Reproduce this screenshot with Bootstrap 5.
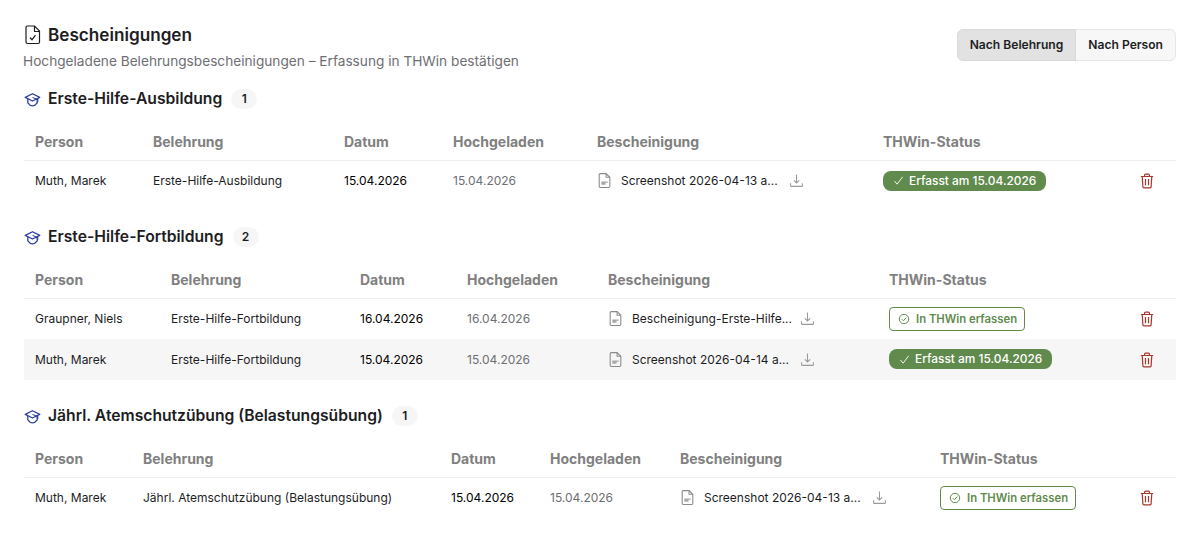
<!DOCTYPE html>
<html lang="de">
<head>
<meta charset="utf-8">
<title>Bescheinigungen</title>
<link href="https://cdn.jsdelivr.net/npm/bootstrap@5.3.0/dist/css/bootstrap.min.css" rel="stylesheet">
<style>
body{font-family:Inter,"Liberation Sans",sans-serif;color:#1d1d1f;background:#fff;font-size:12px;}
.page-wrap{padding:22px 23px 0 24px;}
.page-title{font-size:17.15px;font-weight:600;line-height:26px;margin:0;gap:6px;}
.page-sub{font-size:13.66px;line-height:20px;color:#6e6e73;margin:3px 0 0 -1px;}
.view-toggle{margin-top:7px;height:32px;}
.view-toggle .btn{font-size:12.1px;font-weight:600;color:#1d1d1f;background:#f7f7f7;border:1px solid #e6e6e6;padding:0 12px;line-height:30px;--bs-btn-border-radius:6px;}
.view-toggle .btn.active{background:#e2e2e2;border-color:#d9d9d9;color:#1d1d1f;}
.sec-head{height:24px;gap:7px;}
.sec-title{font-size:15.68px;font-weight:600;line-height:24px;margin:0;}
.sec-count{font-size:12px;font-weight:600;background:#f6f6f6;border-radius:10px;min-width:26px;height:20px;line-height:20px;text-align:center;margin-left:2px;}
.sec-one{margin-top:16px;}
.sec-next{margin-top:24px;}
.cert-table{table-layout:fixed;width:100%;margin:11px 0 0;--bs-table-bg:transparent;}
.cert-table th{font-size:14px;font-weight:650;color:#808080;padding:2px 11px 0;height:38px;border-bottom:1px solid #efefef;vertical-align:middle;}
.cert-table td{font-size:12px;padding:0 11px;height:41px;border:0;vertical-align:middle;color:#1d1d1f;}
.cert-table tr.row-alt td{background:#f6f6f6;}
.cert-table td.date-main{font-weight:400;color:#000;}
.cert-table td.date-up{color:#6e6e73;}
.file-cell{gap:9px;}
.file-name{white-space:nowrap;width:159px;flex:none;}
.st-done{display:inline-flex;align-items:center;gap:5px;background:#618a4d;color:#fff;border-radius:8px;font-size:11.9px;font-weight:500;height:20px;padding:0 10px;white-space:nowrap;}
.st-open{display:inline-flex;align-items:center;gap:6px;border:1px solid #618a4d;background:#fff;color:#618a4d;border-radius:4px;font-size:11.3px;font-weight:600;height:24px;padding:1px 7px 0 8px;white-space:nowrap;}
.act-btn{background:none;border:0;padding:0;display:block;margin-left:1px;}
.c-w1{width:118px}.c-w2{width:191px}.c-w3{width:109px}.c-w4{width:144px}.c-w5{width:286px}.c-w6{width:256px}
.d-w1{width:136px}.d-w2{width:189px}.d-w3{width:107px}.d-w4{width:141px}.d-w5{width:281px}.d-w6{width:250px}
.e-w1{width:108px}.e-w2{width:308px}.e-w3{width:99px}.e-w4{width:130px}.e-w5{width:260px}.e-w6{width:199px}
.col-act{width:auto}
</style>
</head>
<body>
<svg width="0" height="0" class="position-absolute">
<defs>
<symbol id="i-cap" viewBox="0 0 16 16"><path d="M8 2.6 1.2 6 8 9.4 14.8 6Z" fill="none" stroke="currentColor" stroke-width="1.2" stroke-linejoin="round"/><path d="M3.600 7.400v3.800C5 13.200 6.500 14 8 14s3-.8 4.400-2.800V7.400" fill="none" stroke="currentColor" stroke-width="1.200"/><path d="M8 6l5 2.200v2" fill="none" stroke="currentColor" stroke-width="1"/></symbol>
<symbol id="i-file" viewBox="0 0 14 16"><path d="M3 1.500h5.500L12 5v8.500a1 1 0 0 1-1 1H3a1 1 0 0 1-1-1v-11a1 1 0 0 1 1-1Z" fill="none" stroke="#8a8a8a" stroke-width="1"/><path d="M8.500 1.500V5H12" fill="none" stroke="#8a8a8a" stroke-width="1"/><path d="M4 9h6v1.200H8V12H4Z" fill="#a8a8a8"/></symbol>
<symbol id="i-dl" viewBox="0 0 14 14"><path d="M7 1.500v7.500M4.500 6.800 7 9.300l2.500-2.500" fill="none" stroke="#9a9a9a" stroke-width="1"/><path d="M1.500 9.500v2.300c0 .4.300.7.700.7h9.600c.4 0 .7-.3.700-.7V9.500" fill="none" stroke="#9a9a9a" stroke-width="1"/></symbol>
<symbol id="i-trash" viewBox="0 0 14 16"><path d="M.8 3.500h12.400M4.600 3.500V2a.9.9 0 0 1 .9-.9h3a.9.9 0 0 1 .9.900v1.500M2.200 3.500l.7 10.400a1 1 0 0 0 1 .9h6.200a1 1 0 0 0 1-.9l.7-10.400M5.500 6v6.300M8.500 6v6.300" fill="none" stroke="#a8362c" stroke-width="1.200"/></symbol>
<symbol id="i-check" viewBox="0 0 12 12"><path d="M1.500 6.500 4.500 10 10.500 2" fill="none" stroke="currentColor" stroke-width="1"/></symbol>
<symbol id="i-circ" viewBox="0 0 12 12"><circle cx="6" cy="6" r="4.700" fill="none" stroke="currentColor" stroke-width="1"/><path d="M3.800 6.200 5.400 7.800 8.300 4.500" fill="none" stroke="currentColor" stroke-width="1"/></symbol>
</defs>
</svg>
<main class="page-wrap">
<header class="d-flex justify-content-between align-items-start">
<div>
<h1 class="page-title d-flex align-items-center"><svg width="18" height="20" viewBox="0 0 18 20"><path d="M4 1.500h7l5 5v11a1.500 1.500 0 0 1-1.500 1.500h-10.500a1.500 1.500 0 0 1-1.500-1.500v-14.500a1.500 1.500 0 0 1 1.500-1.500Z" transform="translate(-.5 -.5)" fill="none" stroke="#1d1d1f" stroke-width="1.200"/><path d="M10.500 1v5.500h5.500" fill="none" stroke="#1d1d1f" stroke-width="1.200"/><path d="M6 12.500l2 2.200 3.500-4.500" fill="none" stroke="#1d1d1f" stroke-width="1.200"/></svg>Bescheinigungen</h1>
<p class="page-sub">Hochgeladene Belehrungsbescheinigungen – Erfassung in THWin bestätigen</p>
</div>
<div class="btn-group view-toggle" role="group">
<button type="button" class="btn active">Nach Belehrung</button>
<button type="button" class="btn">Nach Person</button>
</div>
</header>

<section class="sec-one">
<div class="sec-head d-flex align-items-center"><svg width="17" height="17" style="color:#2c3e9e"><use href="#i-cap"/></svg><h2 class="sec-title">Erste-Hilfe-Ausbildung</h2><span class="sec-count">1</span></div>
<table class="table cert-table">
<colgroup><col class="c-w1"><col class="c-w2"><col class="c-w3"><col class="c-w4"><col class="c-w5"><col class="c-w6"><col class="col-act"></colgroup>
<thead><tr><th>Person</th><th>Belehrung</th><th>Datum</th><th>Hochgeladen</th><th>Bescheinigung</th><th>THWin-Status</th><th></th></tr></thead>
<tbody>
<tr><td>Muth, Marek</td><td>Erste-Hilfe-Ausbildung</td><td class="date-main">15.04.2026</td><td class="date-up">15.04.2026</td><td><div class="file-cell d-flex align-items-center"><svg width="15" height="17"><use href="#i-file"/></svg><span class="file-name">Screenshot 2026-04-13 a...</span><svg width="15" height="15"><use href="#i-dl"/></svg></div></td><td><span class="st-done"><svg width="11" height="11"><use href="#i-check"/></svg>Erfasst am 15.04.2026</span></td><td><button class="act-btn" type="button" aria-label="Löschen"><svg width="14" height="16"><use href="#i-trash"/></svg></button></td></tr>
</tbody>
</table>
</section>

<section class="sec-next">
<div class="sec-head d-flex align-items-center"><svg width="17" height="17" style="color:#2c3e9e"><use href="#i-cap"/></svg><h2 class="sec-title">Erste-Hilfe-Fortbildung</h2><span class="sec-count">2</span></div>
<table class="table cert-table">
<colgroup><col class="d-w1"><col class="d-w2"><col class="d-w3"><col class="d-w4"><col class="d-w5"><col class="d-w6"><col class="col-act"></colgroup>
<thead><tr><th>Person</th><th>Belehrung</th><th>Datum</th><th>Hochgeladen</th><th>Bescheinigung</th><th>THWin-Status</th><th></th></tr></thead>
<tbody>
<tr><td>Graupner, Niels</td><td>Erste-Hilfe-Fortbildung</td><td class="date-main">16.04.2026</td><td class="date-up">16.04.2026</td><td><div class="file-cell d-flex align-items-center"><svg width="15" height="17"><use href="#i-file"/></svg><span class="file-name">Bescheinigung-Erste-Hilfe...</span><svg width="15" height="15"><use href="#i-dl"/></svg></div></td><td><span class="st-open"><svg width="12" height="12"><use href="#i-circ"/></svg>In THWin erfassen</span></td><td><button class="act-btn" type="button" aria-label="Löschen"><svg width="14" height="16"><use href="#i-trash"/></svg></button></td></tr>
<tr class="row-alt"><td>Muth, Marek</td><td>Erste-Hilfe-Fortbildung</td><td class="date-main">15.04.2026</td><td class="date-up">15.04.2026</td><td><div class="file-cell d-flex align-items-center"><svg width="15" height="17"><use href="#i-file"/></svg><span class="file-name">Screenshot 2026-04-14 a...</span><svg width="15" height="15"><use href="#i-dl"/></svg></div></td><td><span class="st-done"><svg width="11" height="11"><use href="#i-check"/></svg>Erfasst am 15.04.2026</span></td><td><button class="act-btn" type="button" aria-label="Löschen"><svg width="14" height="16"><use href="#i-trash"/></svg></button></td></tr>
</tbody>
</table>
</section>

<section class="sec-next">
<div class="sec-head d-flex align-items-center"><svg width="17" height="17" style="color:#2c3e9e"><use href="#i-cap"/></svg><h2 class="sec-title">Jährl. Atemschutzübung (Belastungsübung)</h2><span class="sec-count">1</span></div>
<table class="table cert-table">
<colgroup><col class="e-w1"><col class="e-w2"><col class="e-w3"><col class="e-w4"><col class="e-w5"><col class="e-w6"><col class="col-act"></colgroup>
<thead><tr><th>Person</th><th>Belehrung</th><th>Datum</th><th>Hochgeladen</th><th>Bescheinigung</th><th>THWin-Status</th><th></th></tr></thead>
<tbody>
<tr><td>Muth, Marek</td><td>Jährl. Atemschutzübung (Belastungsübung)</td><td class="date-main">15.04.2026</td><td class="date-up">15.04.2026</td><td><div class="file-cell d-flex align-items-center"><svg width="15" height="17"><use href="#i-file"/></svg><span class="file-name">Screenshot 2026-04-13 a...</span><svg width="15" height="15"><use href="#i-dl"/></svg></div></td><td><span class="st-open"><svg width="12" height="12"><use href="#i-circ"/></svg>In THWin erfassen</span></td><td><button class="act-btn" type="button" aria-label="Löschen"><svg width="14" height="16"><use href="#i-trash"/></svg></button></td></tr>
</tbody>
</table>
</section>
</main>
</body>
</html>
